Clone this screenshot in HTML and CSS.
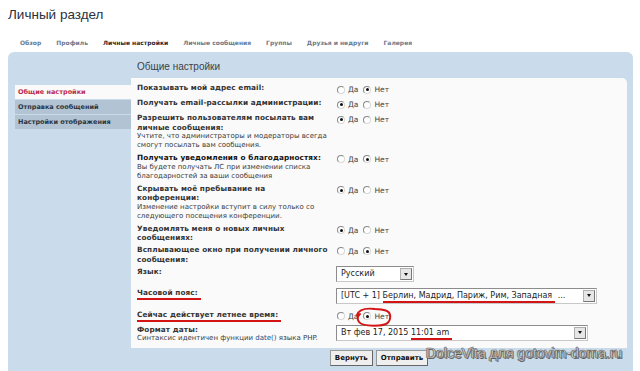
FILE: index.html
```html
<!DOCTYPE html>
<html lang="ru">
<head>
<meta charset="utf-8">
<title>Личный раздел</title>
<link rel="stylesheet" href="styles.css">
</head>
<body>
<div class="page">
  <h1 class="title">Личный раздел</h1>
  <ul class="tabs">
    <li>Обзор</li>
    <li>Профиль</li>
    <li class="current">Личные настройки</li>
    <li>Личные сообщения</li>
    <li>Группы</li>
    <li>Друзья и недруги</li>
    <li>Галерея</li>
  </ul>
  <div class="panel">
    <ul class="side">
      <li class="active">Общие настройки</li>
      <li>Отправка сообщений</li>
      <li>Настройки отображения</li>
    </ul>
    <div class="main">
      <h2 class="heading">Общие настройки</h2>
      <div class="box">
        <div class="row">
          <div class="label"><b class="t">Показывать мой адрес email:</b></div>
          <div class="value radios"><span class="radio"></span><span class="opt">Да</span><span class="radio on"></span><span class="opt">Нет</span></div>
        </div>
        <div class="row">
          <div class="label"><b class="t">Получать email-рассылки администрации:</b></div>
          <div class="value radios"><span class="radio on"></span><span class="opt">Да</span><span class="radio"></span><span class="opt">Нет</span></div>
        </div>
        <div class="row">
          <div class="label"><b class="t">Разрешить пользователям посылать вам<br>личные сообщения:</b><span class="d">Учтите, что администраторы и модераторы всегда<br>смогут посылать вам сообщения.</span></div>
          <div class="value radios"><span class="radio on"></span><span class="opt">Да</span><span class="radio"></span><span class="opt">Нет</span></div>
        </div>
        <div class="row">
          <div class="label"><b class="t dark">Получать уведомления о благодарностях:</b><span class="d">Вы будете получать ЛС при изменении списка<br>благодарностей за ваши сообщения</span></div>
          <div class="value radios"><span class="radio"></span><span class="opt">Да</span><span class="radio on"></span><span class="opt">Нет</span></div>
        </div>
        <div class="row">
          <div class="label"><b class="t">Скрывать моё пребывание на<br>конференции:</b><span class="d">Изменение настройки вступит в силу только со<br>следующего посещения конференции.</span></div>
          <div class="value radios"><span class="radio on"></span><span class="opt">Да</span><span class="radio"></span><span class="opt">Нет</span></div>
        </div>
        <div class="row">
          <div class="label"><b class="t">Уведомлять меня о новых личных<br>сообщениях:</b></div>
          <div class="value radios"><span class="radio on"></span><span class="opt">Да</span><span class="radio"></span><span class="opt">Нет</span></div>
        </div>
        <div class="row">
          <div class="label"><b class="t">Всплывающее окно при получении личного<br>сообщения:</b></div>
          <div class="value radios"><span class="radio"></span><span class="opt">Да</span><span class="radio on"></span><span class="opt">Нет</span></div>
        </div>
        <div class="row">
          <div class="label"><b class="t">Язык:</b></div>
          <div class="value"><div class="select lang"><span class="txt">Русский</span><span class="arrow"></span></div></div>
        </div>
        <div class="row">
          <div class="label"><b class="t"><span class="mark">Часовой пояс:</span></b></div>
          <div class="value"><div class="select tz"><span class="txt">[UTC + 1] <span class="mark">Берлин, Мадрид, Париж, Рим, Западная</span> ...</span><span class="arrow"></span></div></div>
        </div>
        <div class="row">
          <div class="label"><b class="t"><span class="mark">Сейчас действует летнее время:</span></b></div>
          <div class="value radios circled"><span class="radio"></span><span class="opt">Да</span><span class="radio on"></span><span class="opt">Нет</span>
            <svg class="loop" width="42" height="22" viewBox="0 0 42 22"><path d="M4 9 C6 3 14 2 22 3 C30 3.5 36 4 37 9 C38 15 35 19 26 19.5 C17 20 9 20 6 16 C4 13 4.5 10 7 8" fill="none" stroke="#d41414" stroke-width="2" stroke-linecap="round"/></svg>
          </div>
        </div>
        <div class="row">
          <div class="label"><b class="t">Формат даты:</b><span class="d">Синтаксис идентичен функции <span class="link">date()</span> языка PHP.</span></div>
          <div class="value"><div class="select date"><span class="txt">Вт фев 17, 2015 <span class="mark">11:01 am</span></span><span class="arrow"></span></div></div>
        </div>
      </div>
      <div class="buttons">
        <span class="btn">Вернуть</span>
        <span class="btn">Отправить</span>
      </div>
    </div>
  </div>
  <div class="watermark">DolceVita для gotovim-doma.ru</div>
</div>
</body>
</html>
```
FILE: styles.css
```css
* { box-sizing: border-box; margin: 0; padding: 0; }
html, body { width: 640px; height: 371px; overflow: hidden; background: #fff; }
body { font-family: "DejaVu Sans", Verdana, sans-serif; color: #333; }
.page { position: relative; width: 640px; height: 371px; }

.title {
  font-family: "Liberation Sans", Arial, sans-serif;
  font-weight: normal;
  font-size: 13.5px;
  line-height: 16px;
  color: #28313f;
  height: 36px;
  padding: 7px 0 0 8px;
}

.tabs {
  list-style: none;
  display: flex;
  gap: 15px;
  padding-left: 20px;
  height: 14px;
  line-height: 14px;
  margin-bottom: 2px;
  font-size: 6px;
  font-weight: bold;
  color: #6a7a8e;
}
.tabs .current { color: #1f2733; }

.panel {
  display: flex;
  margin-left: 8px;
  width: 625px;
  height: 330px;
  background: #cadceb;
  border-radius: 6px 6px 0 0;
}

.side {
  list-style: none;
  width: 123px;
  padding: 33px 0 0 7px;
}
.side li {
  height: 14px;
  line-height: 14px;
  padding-left: 3px;
  margin-bottom: 1px;
  font-size: 6.5px;
  font-weight: bold;
  color: #2b3442;
  background: #b2c4d4;
}
.side li.active { background: #fafafa; color: #bc2a4d; }

.main { flex: 1; padding-right: 6px; }
.heading {
  font-family: "Liberation Sans", Arial, sans-serif;
  font-weight: normal;
  font-size: 10px;
  line-height: 12px;
  color: #3a3f47;
  padding: 9px 0 0 6px;
  margin-bottom: 5px;
}

.box {
  height: 270px;
  background: #fafafa;
  border-radius: 0 5px 0 0;
  padding: 4px 0 4px 6px;
}

.row { display: flex; align-items: flex-start; }
.label {
  width: 199px;
  flex: none;
  padding: 1.33px 0;
  white-space: nowrap;
}
.label .t {
  display: block;
  font-size: 7.3px;
  line-height: 9.33px;
  letter-spacing: 0.1px;
  color: #333;
}
.label .t.dark { color: #111; }
.label .d {
  display: block;
  font-size: 7px;
  line-height: 9.33px;
  color: #3a3a3a;
}
.link { color: #105289; }

.value {
  min-height: 15px;
  display: flex;
  align-items: flex-start;
  font-size: 7.5px;
  color: #444;
}
.value.radios {
  height: 12px;
  align-items: center;
}
.radio {
  width: 8px;
  height: 8px;
  border-radius: 50%;
  border: 1px solid #8a8a8a;
  border-right-color: #d8d8d8;
  border-bottom-color: #d8d8d8;
  background: #fff;
  margin: 0 3px 0 1px;
  position: relative;
}
.radio.on::after {
  content: "";
  position: absolute;
  left: 1.5px;
  top: 1.5px;
  width: 3px;
  height: 3px;
  border-radius: 50%;
  background: #111;
}
.opt { margin-right: 4px; }

.select {
  display: flex;
  align-items: center;
  height: 16px;
  margin-top: 1px;
  margin-bottom: 4.67px;
  border: 1px solid #8c8c8c;
  border-right-color: #c8c8c8;
  border-bottom-color: #c8c8c8;
  background: #fff;
  font-size: 8px;
  color: #222;
}
.select .txt { flex: 1; padding-left: 4px; white-space: nowrap; overflow: hidden; line-height: 14px; }
.select .arrow {
  width: 12px;
  height: 12px;
  margin-right: 1px;
  background: #e6e6e6;
  border: 1px solid #b0b0b0;
  border-right-color: #777;
  border-bottom-color: #777;
  display: flex;
  align-items: center;
  justify-content: center;
}
.select .arrow::before {
  content: "";
  border-left: 2.5px solid transparent;
  border-right: 2.5px solid transparent;
  border-top: 3px solid #111;
}
.lang { width: 78px; }
.tz { width: 261px; }
.date { width: 252px; }

.mark { border-bottom: 2px solid #d41414; padding-bottom: 1px; padding-right: 3px; }

.circled { position: relative; }
.loop { position: absolute; left: 17px; top: -3px; }

.buttons {
  display: flex;
  justify-content: center;
  gap: 3px;
  margin-top: 2px;
}
.btn {
  height: 16px;
  line-height: 14px;
  padding: 0 4px;
  border: 1px solid #666;
  border-top-color: #999;
  border-left-color: #999;
  background: #efefef;
  font-size: 7px;
  font-weight: bold;
  color: #111;
}

.watermark {
  position: absolute;
  left: 426px;
  top: 345px;
  font-family: "Liberation Sans", Arial, sans-serif;
  font-size: 14px;
  color: #fff;
  -webkit-text-stroke: 0.5px #555;
  text-shadow: 1px 1px 0 #666, -1px 0 0 #888;
  white-space: nowrap;
}
```
